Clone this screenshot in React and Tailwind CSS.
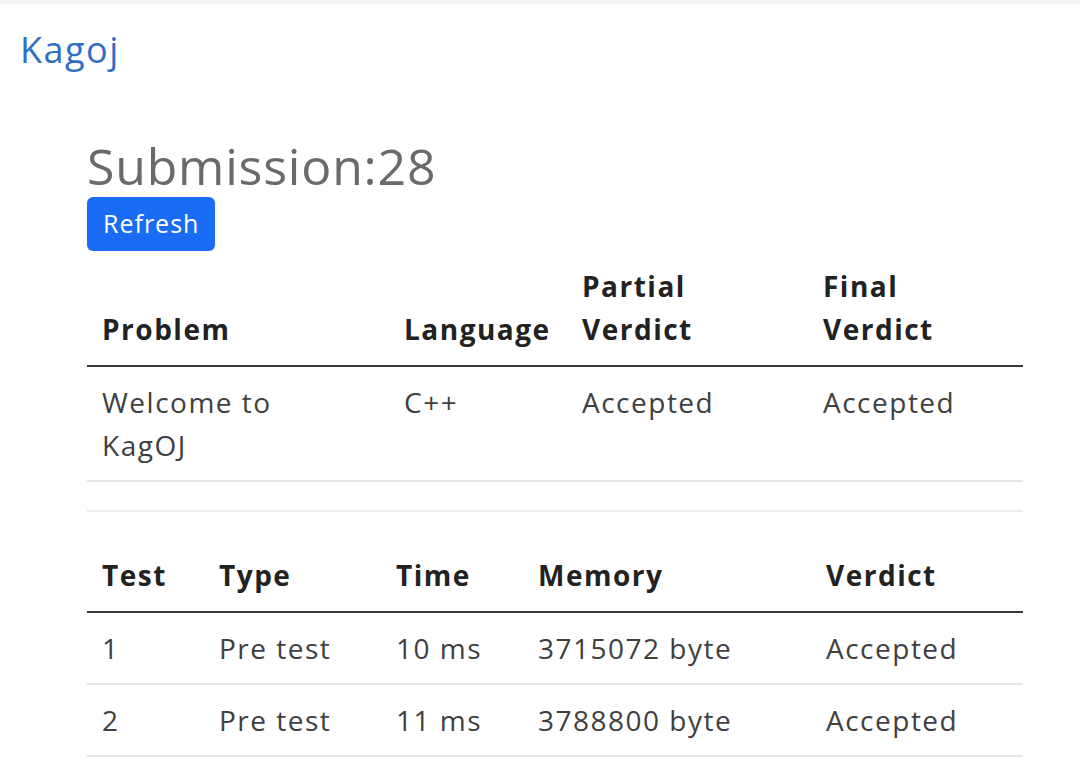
const font = { fontFamily: '"Open Sans", "Noto Sans", sans-serif' };

const submission = {
	problem: "Welcome to KagOJ",
	language: "C++",
	partial: "Accepted",
	final: "Accepted",
};

const tests = [
	{ id: 1, type: "Pre test", time: "10 ms", memory: "3715072 byte", verdict: "Accepted" },
	{ id: 2, type: "Pre test", time: "11 ms", memory: "3788800 byte", verdict: "Accepted" },
];

const th = "text-left font-bold text-[#222] px-[15px] py-[14px]";
const td = "px-[15px] pt-[14px] pb-[13px]";

const App = () => {
	return (
		<div className="min-h-[768px] bg-white border-t-4 border-[#f3f3f3]" style={font}>
			{/* Navbar */}
			<nav className="px-5 pt-[24px] pb-[10px]">
				<a className="text-[36px] leading-[44px] tracking-[1.5px] text-[#2f6fc4]">Kagoj</a>
			</nav>

			<div className="pl-[87px] pr-[57px] pt-[53px]">
				<h2 className="text-[50px] leading-[62px] tracking-[0.8px] text-[#6a6a6a]">Submission:28</h2>
				<button className="h-[54px] px-[16px] rounded-[6px] bg-[#1b6cf5] text-white text-[25px] tracking-[1px]">
					Refresh
				</button>

				{/* Submission summary */}
				<table className="w-[936px] table-fixed border-collapse text-[28px] leading-[43px] tracking-[1.5px] text-[#404040] mb-[28px]">
					<colgroup>
						<col className="w-[302px]" />
						<col className="w-[178px]" />
						<col className="w-[241px]" />
						<col className="w-[215px]" />
					</colgroup>
					<thead className="align-bottom">
						<tr className="border-b-2 border-[#3a3a3a]">
							<th className={th}>Problem</th>
							<th className={`${th} whitespace-nowrap`}>Language</th>
							<th className={th}>
								Partial
								<br />
								Verdict
							</th>
							<th className={th}>
								Final
								<br />
								Verdict
							</th>
						</tr>
					</thead>
					<tbody className="align-top">
						<tr className="border-b-2 border-[#e6e6e6]">
							<td className={td}>
								<span className="block max-w-[200px]">{submission.problem}</span>
							</td>
							<td className={td}>{submission.language}</td>
							<td className={td}>{submission.partial}</td>
							<td className={td}>{submission.final}</td>
						</tr>
					</tbody>
				</table>

				<hr className="w-[936px] border-t-2 border-[#ececec] mb-[28px]" />

				{/* Tests */}
				<table className="w-[936px] table-fixed border-collapse text-[28px] leading-[43px] tracking-[1.5px] text-[#404040]">
					<colgroup>
						<col className="w-[117px]" />
						<col className="w-[177px]" />
						<col className="w-[142px]" />
						<col className="w-[288px]" />
						<col className="w-[212px]" />
					</colgroup>
					<thead>
						<tr className="border-b-2 border-[#3a3a3a]">
							<th className={th}>Test</th>
							<th className={th}>Type</th>
							<th className={th}>Time</th>
							<th className={th}>Memory</th>
							<th className={th}>Verdict</th>
						</tr>
					</thead>
					<tbody>
						{tests.map((t) => (
							<tr key={t.id} className="border-b-2 border-[#e6e6e6]">
								<td className={td}>{t.id}</td>
								<td className={td}>{t.type}</td>
								<td className={td}>{t.time}</td>
								<td className={td}>{t.memory}</td>
								<td className={td}>{t.verdict}</td>
							</tr>
						))}
					</tbody>
				</table>
			</div>
		</div>
	);
};

export default App;
